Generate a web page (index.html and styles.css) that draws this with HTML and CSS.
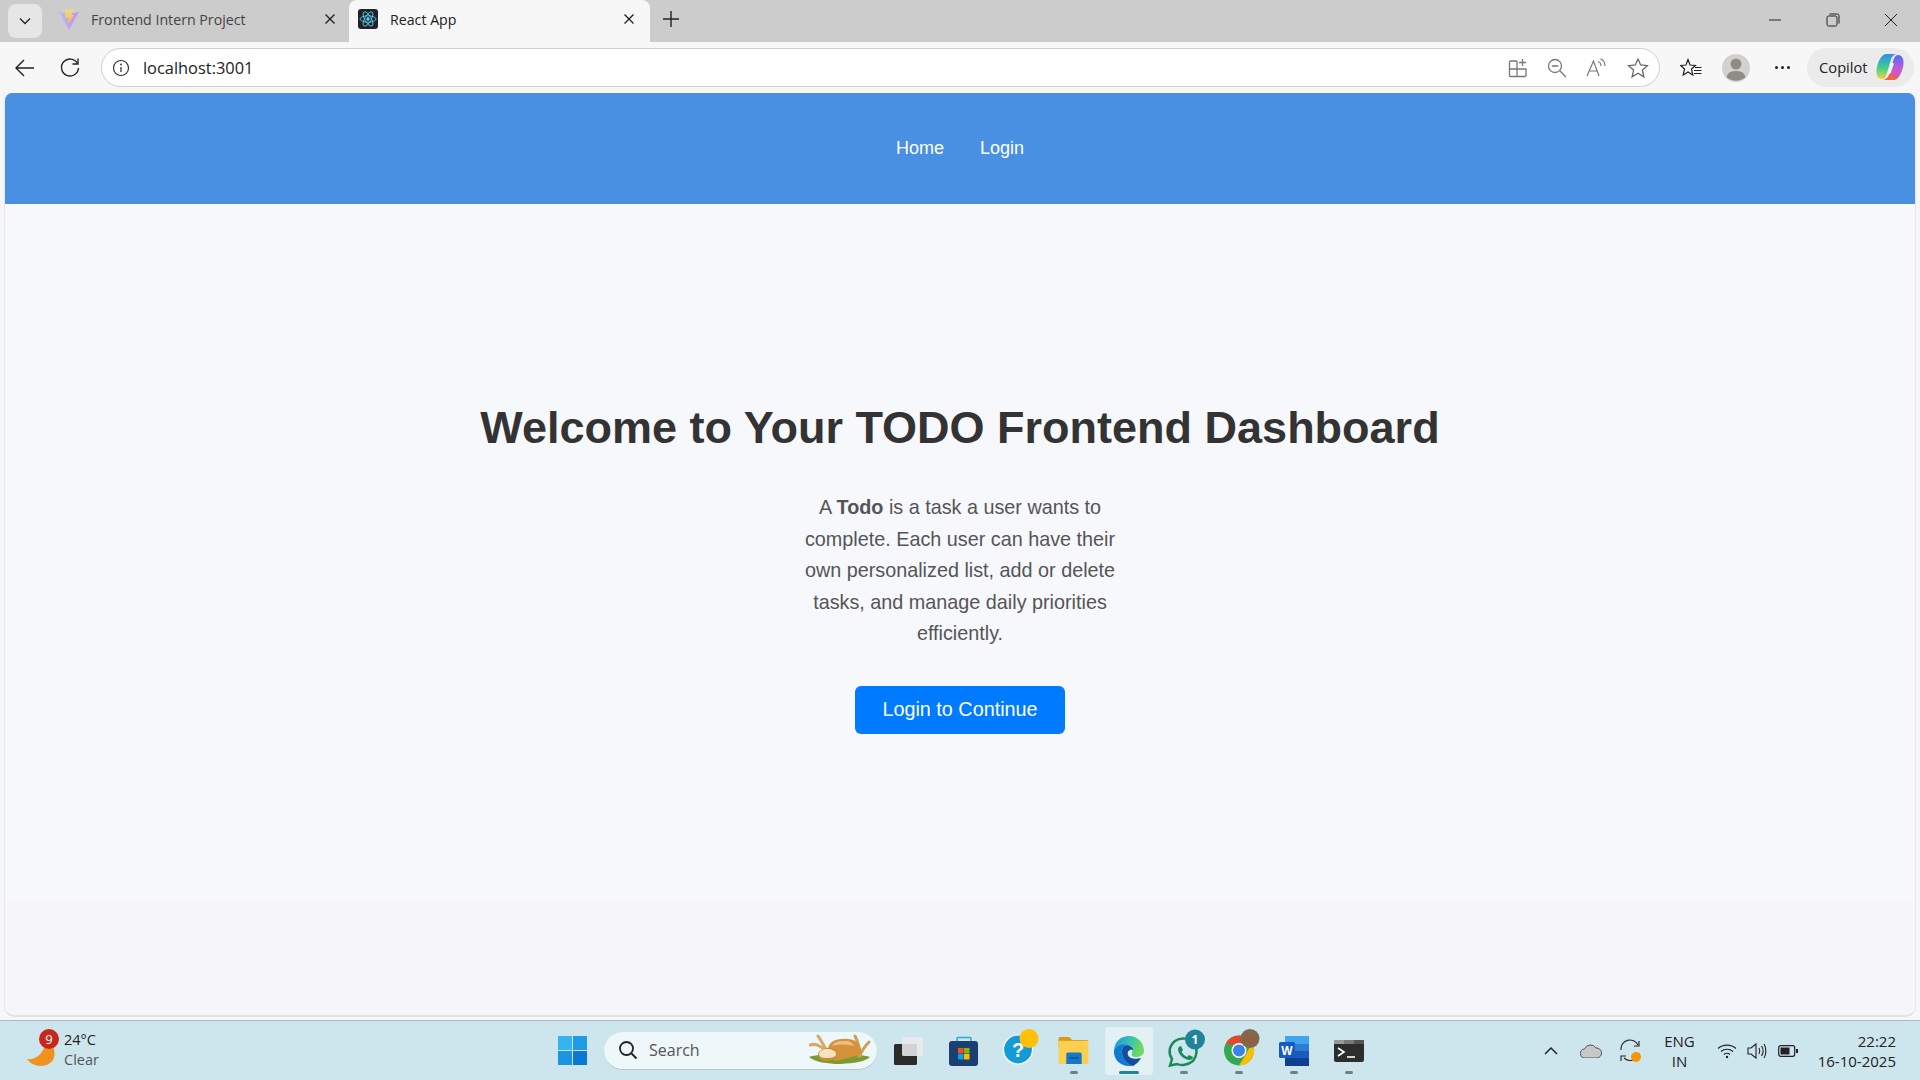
FILE: index.html
```html
<!DOCTYPE html>
<html lang="en">
<head>
  <meta charset="UTF-8" />
  <title>React App</title>
  <link rel="stylesheet" href="styles.css">
</head>
<body>
  <div class="tabstrip">
    <button class="tab-menu">
      <svg width="14" height="14" viewBox="0 0 14 14"><path d="M2 4.500 7 9.500 12 4.500" fill="none" stroke="#222" stroke-width="1.300"/></svg>
    </button>
    <div class="tab">
      <svg class="favicon" width="20" height="21" viewBox="0 0 20 21">
        <defs>
          <linearGradient id="viteBody" x1="0" y1="0" x2="1" y2="0"><stop offset="0" stop-color="#a3cdf3"/><stop offset=".5" stop-color="#bca2ef"/><stop offset="1" stop-color="#c596ee"/></linearGradient>
          <linearGradient id="viteBolt" x1="0" y1="0" x2="0" y2="1"><stop offset="0" stop-color="#f3dc84"/><stop offset="1" stop-color="#f0b24e"/></linearGradient>
        </defs>
        <path d="M0 3 10 5 20 3 10 21Z" fill="url(#viteBody)"/>
        <path d="M6 1 14 0 12.500 6 15 6 8.500 16 9.500 9 6.500 9Z" fill="url(#viteBolt)"/>
      </svg>
      <span class="tab-title">Frontend Intern Project</span>
      <svg class="tab-close" width="12" height="12" viewBox="0 0 12 12"><path d="M1.500 1.500 10.500 10.500M10.500 1.500 1.500 10.500" stroke="#222" stroke-width="1.400"/></svg>
    </div>
    <div class="tab tab-active">
      <svg class="favicon" width="20" height="20" viewBox="0 0 20 20">
        <rect width="20" height="20" rx="3" fill="#20232a"/>
        <circle cx="10" cy="10" r="1.700" fill="#61dafb"/>
        <g fill="none" stroke="#61dafb" stroke-width=".8">
          <ellipse cx="10" cy="10" rx="8" ry="3.200"/>
          <ellipse cx="10" cy="10" rx="8" ry="3.200" transform="rotate(60 10 10)"/>
          <ellipse cx="10" cy="10" rx="8" ry="3.200" transform="rotate(120 10 10)"/>
        </g>
      </svg>
      <span class="tab-title">React App</span>
      <svg class="tab-close" width="12" height="12" viewBox="0 0 12 12"><path d="M1.500 1.500 10.500 10.500M10.500 1.500 1.500 10.500" stroke="#222" stroke-width="1.400"/></svg>
    </div>
    <svg class="tab-new" width="18" height="18" viewBox="0 0 18 18"><path d="M9 1V17M1 9H17" stroke="#222" stroke-width="1.400"/></svg>
    <div class="window-controls">
      <svg width="14" height="14" viewBox="0 0 14 14"><path d="M1 7H13" stroke="#222" stroke-width="1"/></svg>
      <svg width="14" height="14" viewBox="0 0 14 14"><rect x="1" y="3" width="10" height="10" rx="1.500" fill="none" stroke="#222"/><path d="M3.500 1H11.500A1.500 1.500 0 0 1 13 2.500V10.500" fill="none" stroke="#222"/></svg>
      <svg width="14" height="14" viewBox="0 0 14 14"><path d="M1 1 13 13M13 1 1 13" stroke="#222" stroke-width="1"/></svg>
    </div>
  </div>

  <div class="toolbar">
    <svg class="tool-back" width="22" height="22" viewBox="0 0 22 22"><path d="M20 11H2M10 3 2 11 10 19" fill="none" stroke="#222" stroke-width="1.400"/></svg>
    <svg class="tool-refresh" width="22" height="22" viewBox="0 0 22 22"><path d="M18.500 6.500A8.500 8.500 0 1 0 19.500 11" fill="none" stroke="#222" stroke-width="1.400"/><path d="M19 1.500V7H13.500" fill="none" stroke="#222" stroke-width="1.400"/></svg>
    <div class="address">
      <svg width="18" height="18" viewBox="0 0 18 18"><circle cx="9" cy="9" r="7.500" fill="none" stroke="#333" stroke-width="1.200"/><path d="M9 8V13" stroke="#333" stroke-width="1.300"/><circle cx="9" cy="5.500" r=".9" fill="#333"/></svg>
      <span class="url">localhost:3001</span>
      <div class="address-icons">
        <svg width="20" height="20" viewBox="0 0 20 20" fill="none" stroke="#777" stroke-width="1.300"><path d="M9 3H2.500A1 1 0 0 0 1.500 4V17.500A1 1 0 0 0 2.500 18.500H17A1 1 0 0 0 18 17.500V11H1.500M9 3V18.500"/><path d="M14.500 1V8M11 4.500H18"/></svg>
        <svg width="20" height="20" viewBox="0 0 20 20" fill="none" stroke="#777" stroke-width="1.300"><circle cx="8" cy="8" r="6.500"/><path d="M4.800 8H11.200M13 13 19 19"/></svg>
        <svg width="22" height="20" viewBox="0 0 22 20" fill="none" stroke="#777" stroke-width="1.200"><path d="M1 18 7.500 3 13 18M3.500 13H11"/><path d="M12 3.500C14 4 15 5.500 15 8M14.500 1C17.500 2 19 4.500 19 8"/></svg>
        <svg width="22" height="22" viewBox="0 0 22 22" fill="none" stroke="#666" stroke-width="1.300"><path d="M11 2 13.700 8 20.500 8.700 15.400 13.100 16.900 19.800 11 16.300 5.100 19.800 6.600 13.100 1.500 8.700 8.300 8Z"/></svg>
      </div>
    </div>
    <svg class="tool-favs" width="22" height="20" viewBox="0 0 22 20" fill="none" stroke="#222" stroke-width="1.200"><path d="M8 1.500 10 7 15.500 7.500 11.500 11 12.800 17 8 14 3.200 17 4.500 11 .7 7.500 6 7Z"/><path d="M15 9.500H21.500M14 12.500H21.500M14 15.500H21.500"/></svg>
    <svg class="tool-avatar" width="28" height="28" viewBox="0 0 28 28"><circle cx="14" cy="14" r="14" fill="#d3d2ce"/><circle cx="14" cy="10" r="5.500" fill="#8f8c87"/><path d="M4.500 23C6 18.500 9 17 14 17S22 18.500 23.500 23A14 14 0 0 1 4.500 23Z" fill="#8f8c87"/></svg>
    <div class="tool-dots"><span></span><span></span><span></span></div>
    <div class="copilot">
      <span>Copilot</span>
      <svg width="28" height="28" viewBox="0 0 28 28">
        <defs>
          <linearGradient id="copilotLeft" x1="0" y1="0" x2="0" y2="1"><stop offset="0" stop-color="#2f8ff0"/><stop offset=".55" stop-color="#3fcf8c"/><stop offset="1" stop-color="#f2d23e"/></linearGradient>
          <linearGradient id="copilotRight" x1="0" y1="0" x2="0" y2="1"><stop offset="0" stop-color="#4f6cf0"/><stop offset=".5" stop-color="#b45ee0"/><stop offset="1" stop-color="#f0507a"/></linearGradient>
        </defs>
        <path d="M10 1H20C17 2 15.500 4 14.500 8L11 20C10 23 9 26 7 26H6C2 26 0 22 .5 17 1 11 5 1 10 1Z" fill="url(#copilotLeft)"/>
        <path d="M18 27H8C11 26 12.500 24 13.500 20L17 8C18 5 19.500 2 22 2 26 2 28 6 27.500 11 27 17 23 27 18 27Z" fill="url(#copilotRight)"/>
        <path d="M8 27C11 26 12.500 24 13.500 21L20 25C19 26 18.500 27 17 27Z" fill="#f2673a"/>
        <path d="M16.500 11 13.500 19.500" stroke="#f4f4f4" stroke-width="2.500" stroke-linecap="round"/>
      </svg>
    </div>
  </div>

  <main class="page">
    <nav class="navbar">
      <a href="#">Home</a>
      <a href="#">Login</a>
    </nav>
    <section class="hero">
      <h1>Welcome to Your TODO Frontend Dashboard</h1>
      <p>A <strong>Todo</strong> is a task a user wants to complete. Each user can have their own personalized list, add or delete tasks, and manage daily priorities efficiently.</p>
      <button class="login-btn">Login to Continue</button>
    </section>
  </main>

  <footer class="taskbar">
    <div class="weather">
      <svg class="weather-icon" width="32" height="26" viewBox="0 0 32 26"><path d="M1 18C8 19 17 15 20 1 29 2 30 14 27 19 22 27 7 27 1 18Z" fill="#f0921f"/></svg>
      <span class="weather-badge">9</span>
      <div class="weather-text"><span>24°C</span><span class="weather-sub">Clear</span></div>
    </div>

    <div class="task-center">
      <div class="slot">
        <svg width="29" height="29" viewBox="0 0 29 29">
          <rect width="14" height="14" fill="#36b4f2"/><rect x="15" width="14" height="14" fill="#1e9ae6"/>
          <rect y="15" width="14" height="14" fill="#1a94e4"/><rect x="15" y="15" width="14" height="14" fill="#0a78d4"/>
        </svg>
      </div>
      <div class="search">
        <svg width="20" height="20" viewBox="0 0 20 20" fill="none" stroke="#222" stroke-width="1.800"><circle cx="8.500" cy="8.500" r="6.500"/><path d="M13.500 13.500 18.500 18.500"/></svg>
        <span>Search</span>
        <svg class="search-art" width="62" height="32" viewBox="0 0 62 32">
          <path d="M0 23C10 19 50 19 61 23 56 28 44 29 32 30 18 30 6 28 0 23Z" fill="#7c9a2f"/>
          <path d="M1 11C6 9 13 12 19 19M9 2C12 6 15 12 19 19" fill="none" stroke="#d3ad68" stroke-width="3" stroke-linecap="round"/>
          <path d="M46 2C49 8 51 14 50 22M60 8C56 12 53 16 51 22" fill="none" stroke="#c9a35a" stroke-width="3" stroke-linecap="round"/>
          <path d="M19 14C21 7 27 5 34 5 43 4 51 8 52 15 53 19 52 20 50 21L27 27C22 26 18 20 19 14Z" fill="#d6923a"/>
          <path d="M23 12C25 8 30 7 36 7 41 7 44 9 45 12 38 10 30 10 23 12Z" fill="#eebf7e"/>
          <path d="M9 21C9 17 13 15 18 14 24 13 28 17 28 21 28 25 24 27 18 27 13 27 9 25 9 21Z" fill="#c98a3a"/>
          <path d="M10 20C10 17 14 15 18 15 23 15 27 17 27 20 27 23 23 24 18 24 13 24 10 23 10 20Z" fill="#f5e3bd"/>
        </svg>
      </div>
      <div class="slot">
        <svg width="29" height="28" viewBox="0 0 29 28"><rect y="7" width="23" height="21" rx="1.500" fill="#2b2b2b"/><rect x="8" width="21" height="19" rx="1.500" fill="#e9ebec" opacity=".88"/></svg>
      </div>
      <div class="slot">
        <svg width="30" height="30" viewBox="0 0 30 30">
          <path d="M8 5V2.500A1 1 0 0 1 9 1.500H21A1 1 0 0 1 22 2.500V5" fill="none" stroke="#2aa9e0" stroke-width="1.500"/>
          <rect y="5" width="29" height="25" rx="3" fill="#1c3f72"/>
          <rect x="9" y="12" width="5.500" height="5.500" fill="#f25022"/><rect x="15" y="12" width="5.500" height="5.500" fill="#7fba00"/>
          <rect x="9" y="18" width="5.500" height="5.500" fill="#00a4ef"/><rect x="15" y="18" width="5.500" height="5.500" fill="#ffb900"/>
        </svg>
      </div>
      <div class="slot">
        <svg width="44" height="44" viewBox="0 0 44 44">
          <circle cx="21" cy="20.500" r="14.500" fill="#129bd6" stroke="#fff" stroke-width="1.200"/>
          <text x="21" y="28" text-anchor="middle" class="help-mark">?</text>
          <circle cx="32" cy="9.500" r="9.500" fill="#ffc107"/>
        </svg>
      </div>
      <div class="slot slot-open">
        <svg width="31" height="27" viewBox="0 0 31 28">
          <path d="M0 2A2 2 0 0 1 2 0H11L14 3H30V10H0Z" fill="#d99a0b"/>
          <path d="M0 4H29A2 2 0 0 1 31 6V26A2 2 0 0 1 29 28H2A2 2 0 0 1 0 26Z" fill="#fbd04f"/>
          <path d="M8 18A2 2 0 0 1 10 16H22A2 2 0 0 1 24 18V28H8Z" fill="#1578c9"/>
          <rect x="11" y="21" width="10" height="1.500" fill="#0c4f8c"/>
        </svg>
      </div>
      <div class="slot slot-active">
        <svg width="32" height="32" viewBox="0 0 32 32">
          <defs>
            <linearGradient id="edgeTop" x1="0" y1="0" x2="1" y2=".3"><stop offset="0" stop-color="#1d93d8"/><stop offset=".55" stop-color="#35c3b4"/><stop offset="1" stop-color="#71da5c"/></linearGradient>
          </defs>
          <path d="M1 15C2 6 8 1 16 1 25 1 31 8 31 16 31 20 27 22 23 22 20 22 18 21 19 18 20 15 19 11 15 10 10 9 4 10 1 15Z" fill="url(#edgeTop)"/>
          <path d="M1 15C4 10 10 8 15 10 10 10 8 14 9 19 10 25 15 30 20 31 19 31 17 31 16 31 7 31 0 24 1 15Z" fill="#0f7ad0"/>
          <path d="M9 19C8 14 10 10 15 10 18 11 20 13 20 15 16 14 14 17 15 20 16 23 21 25 28 23 25 28 22 30 20 31 15 30 10 25 9 19Z" fill="#0f4f9e"/>
        </svg>
      </div>
      <div class="slot slot-open">
        <svg width="44" height="44" viewBox="0 0 44 44">
          <path d="M8 36.500 10 30C6 24 7 17 13 12 19 8 27 9 32 14 36 20 35 27 31 32 26 36 19 37 15 35Z" fill="none" stroke="#1b8a5a" stroke-width="2.500"/>
          <path d="M16 20C16 18 18 17 19 17L21 21 19.500 23C21 25 23 27 25 28L27 26 31 28C31 30 29 31 27 31 21 30 16 25 16 20Z" fill="#1b8a5a"/>
          <circle cx="33" cy="10.500" r="10" fill="#21829a"/>
          <text x="33" y="15" text-anchor="middle" class="count-mark">1</text>
        </svg>
      </div>
      <div class="slot slot-open">
        <svg width="44" height="44" viewBox="0 0 44 44">
          <circle cx="22" cy="21.500" r="15" fill="#34a853"/>
          <path d="M22 6.500A15 15 0 0 1 35 14H22L14 16 9 14A15 15 0 0 1 22 6.500Z" fill="#e8452f"/>
          <path d="M35 14A15 15 0 0 1 22 36.500L29 25Z" fill="#fbbc04"/>
          <circle cx="22" cy="21.500" r="7.500" fill="#fff"/><circle cx="22" cy="21.500" r="6" fill="#3b82e6"/>
          <circle cx="33" cy="9.500" r="9.500" fill="#7d6a4c"/>
          <path d="M27 8C31 4 35 14 40 8M26 12C31 9 35 18 40 12" stroke="#a3563c" stroke-width="2" fill="none"/>
        </svg>
      </div>
      <div class="slot slot-open">
        <svg width="30" height="30" viewBox="0 0 30 30">
          <rect x="6" width="24" height="8" fill="#41a5ee"/><rect x="6" y="8" width="24" height="7" fill="#2b7cd3"/>
          <rect x="6" y="15" width="24" height="7" fill="#185abd"/><rect x="6" y="22" width="24" height="8" fill="#103f91"/>
          <rect y="6" width="16" height="16" rx="1.500" fill="#185abd"/>
          <text x="8" y="19" text-anchor="middle" class="word-mark">W</text>
        </svg>
      </div>
      <div class="slot slot-open">
        <svg width="30" height="22" viewBox="0 0 30 22">
          <rect width="30" height="22" rx="2" fill="#2d2d2d"/>
          <rect x="10" width="10" height="4" fill="#777"/><rect width="10" height="4" fill="#999"/><rect x="20" width="10" height="4" fill="#555"/>
          <path d="M4 8 10 12 4 16" fill="none" stroke="#fff" stroke-width="1.600"/>
          <path d="M13 17H21" stroke="#fff" stroke-width="1.600"/>
        </svg>
      </div>
    </div>

    <div class="tray">
      <svg class="tray-chevron" width="14" height="10" viewBox="0 0 14 10"><path d="M1 8 7 2 13 8" fill="none" stroke="#222" stroke-width="1.500"/></svg>
      <svg class="tray-cloud" width="22" height="14" viewBox="0 0 22 14"><path d="M5 14A4.500 4.500 0 0 1 4.500 5 6.500 6.500 0 0 1 16 4 5 5 0 0 1 17 14Z" fill="#c8c8c8" stroke="#555"/></svg>
      <svg class="tray-sync" width="22" height="24" viewBox="0 0 22 24">
        <path d="M1 11A9 9 0 0 1 18 6M19 14A9 9 0 0 1 4 19" fill="none" stroke="#222" stroke-width="1.100"/>
        <path d="M19 2V7H14M1 22V17H6" fill="none" stroke="#222" stroke-width="1.100"/>
        <circle cx="16" cy="18" r="5" fill="#f7960a"/>
      </svg>
      <div class="tray-lang"><span>ENG</span><span>IN</span></div>
      <svg class="tray-wifi" width="20" height="16" viewBox="0 0 20 16" fill="none" stroke="#222" stroke-width="1.200"><path d="M1 5.500C6 1 14 1 19 5.500M4 8.500C7.500 5.500 12.500 5.500 16 8.500M7 11.500C8.800 10 11.200 10 13 11.500"/><circle cx="10" cy="14" r="1.200" fill="#222" stroke="none"/></svg>
      <svg class="tray-volume" width="20" height="18" viewBox="0 0 20 18" fill="none" stroke="#222" stroke-width="1.100"><path d="M1 6H4L9 2V16L4 12H1Z"/><path d="M12 6C13 8 13 10 12 12M14.500 4C16.500 7 16.500 11 14.500 14M17 2C19.500 6 19.500 12 17 16"/></svg>
      <svg class="tray-battery" width="20" height="12" viewBox="0 0 20 12"><rect x=".7" y=".7" width="16" height="10.600" rx="2" fill="none" stroke="#222" stroke-width="1.200"/><rect x="2.500" y="2.500" width="9" height="7" fill="#222"/><rect x="18" y="4" width="2" height="4" fill="#222"/></svg>
      <div class="clock"><span>22:22</span><span>16-10-2025</span></div>
    </div>
  </footer>
</body>
</html>
```

FILE: styles.css
```css
* {
  box-sizing: border-box;
  margin: 0;
  padding: 0;
}

body {
  height: 100vh;
  overflow: hidden;
  display: flex;
  flex-direction: column;
  background-color: #f7f7f7;
  font-family: 'Liberation Sans', Arial, sans-serif;
  color: #222;
}

/* browser tab strip */
.tabstrip {
  height: 42px;
  display: flex;
  align-items: flex-end;
  background-color: #cccccc;
  padding-left: 8px;
}

.tab-menu {
  width: 34px;
  height: 34px;
  margin-bottom: 4px;
  margin-right: 6px;
  border: none;
  border-radius: 8px;
  background-color: #e6e6e6;
  display: flex;
  align-items: center;
  justify-content: center;
}

.tab {
  width: 301px;
  height: 42px;
  display: flex;
  align-items: center;
  padding: 0 13px 4px 11px;
  font-family: 'Open Sans', sans-serif;
  font-size: 14.2px;
  color: #444;
}

.tab-active {
  padding: 0 15px 4px 9px;
  background-color: #f7f7f7;
  border-radius: 8px 8px 0 0;
  color: #222;
}

.favicon {
  flex-shrink: 0;
  margin-right: 12px;
}

.tab-title {
  flex: 1;
}

.tab-new {
  margin: 0 0 14px 12px;
}

.window-controls {
  margin-left: auto;
  display: flex;
  justify-content: flex-end;
  padding-right: 22px;
  margin-bottom: 15px;
  gap: 44px;
}

/* address bar row */
.toolbar {
  height: 51px;
  display: flex;
  align-items: center;
  background-color: #f7f7f7;
  padding: 0 6px 0 14px;
}

.tool-refresh {
  margin-left: 23px;
}

.address {
  width: 1560px;
  height: 39px;
  margin-left: 20px;
  display: flex;
  align-items: center;
  padding: 0 10px 0 10px;
  background-color: #fff;
  border: 1px solid #cfcfcf;
  border-radius: 20px;
}

.url {
  margin-left: 13px;
  font-family: 'Open Sans', sans-serif;
  font-size: 16.4px;
}

.address-icons {
  margin-left: auto;
  display: flex;
  align-items: center;
  gap: 19px;
}

.tool-favs {
  margin-left: 20px;
}

.tool-avatar {
  margin-left: 20px;
}

.tool-dots {
  margin-left: 25px;
  display: flex;
  gap: 3px;
}

.tool-dots span {
  width: 3px;
  height: 3px;
  border-radius: 50%;
  background-color: #222;
}

.copilot {
  margin-left: 17px;
  width: 107px;
  height: 39px;
  display: flex;
  align-items: center;
  justify-content: space-between;
  padding: 0 10px 2px 12px;
  background-color: #ebebeb;
  border-radius: 20px;
  font-family: 'Open Sans', sans-serif;
  font-size: 14.700px;
}

/* the page itself */
.page {
  height: 924px;
  margin: 0 4px;
  display: flex;
  flex-direction: column;
  background-color: #f5f5fa;
  border-bottom: 2px solid #e2e2e6;
  border-left: 1px solid #e8e8ec;
  border-right: 1px solid #e8e8ec;
  border-radius: 8px 8px 10px 10px;
  overflow: hidden;
}

.navbar {
  height: 111px;
  flex-shrink: 0;
  display: flex;
  align-items: center;
  justify-content: center;
  gap: 36px;
  background-color: #4a90e2;
}

.navbar a {
  color: #fff;
  font-size: 18px;
  font-weight: 500;
  text-decoration: none;
}

.hero {
  height: 698px;
  flex-shrink: 0;
  display: flex;
  flex-direction: column;
  align-items: center;
  padding-top: 198px;
  background-color: #f6f8fc;
}

.hero h1 {
  font-size: 45px;
  font-weight: bold;
  color: #333;
  margin-bottom: 38px;
}

.hero p {
  width: 340px;
  font-size: 19.800px;
  line-height: 31.500px;
  text-align: center;
  color: #555;
  margin-bottom: 36px;
}

.login-btn {
  width: 210px;
  height: 48px;
  border: none;
  border-radius: 6px;
  background-color: #007bff;
  color: #fff;
  font-family: 'Liberation Sans', Arial, sans-serif;
  font-size: 19.800px;
}

/* windows taskbar */
.taskbar {
  flex: 1;
  margin-top: 3px;
  display: flex;
  align-items: center;
  background-color: #cde5ec;
  border-top: 1px solid #a9bcc4;
  font-family: 'Open Sans', sans-serif;
}

.weather {
  position: relative;
  width: 545px;
  display: flex;
  align-items: center;
  padding-left: 26px;
}

.weather-icon {
  margin-top: 6px;
}

.weather-badge {
  position: absolute;
  left: 39px;
  top: -3px;
  width: 20px;
  height: 20px;
  border-radius: 50%;
  background-color: #c9261c;
  color: #fff;
  font-size: 13px;
  line-height: 20px;
  text-align: center;
}

.weather-text {
  display: flex;
  flex-direction: column;
  margin-left: 6px;
  margin-top: -2px;
  font-size: 14.500px;
  line-height: 20px;
}

.weather-sub {
  color: #555;
}

.task-center {
  display: flex;
  align-items: center;
}

.slot {
  position: relative;
  width: 55px;
  height: 48px;
  display: flex;
  align-items: center;
  justify-content: center;
  flex-shrink: 0;
}

.slot-open::after,
.slot-active::after {
  content: "";
  position: absolute;
  left: 50%;
  bottom: 1px;
  width: 8px;
  height: 3px;
  margin-left: -4px;
  border-radius: 2px;
  background-color: #6f7f86;
}

.slot-active {
  width: 48px;
  margin: 0 3.500px;
  border-radius: 4px;
  background-color: #e3f1f5;
}

.slot-active::after {
  width: 20px;
  margin-left: -10px;
  background-color: #21829a;
}

.search {
  width: 273px;
  height: 38px;
  margin: 0 4px;
  display: flex;
  align-items: center;
  padding-left: 14px;
  border-radius: 19px;
  background-color: #eef7f9;
  border-bottom: 1px solid #b4c6cc;
  font-size: 16px;
  color: #555;
  flex-shrink: 0;
}

.search span {
  margin-left: 11px;
}

.search-art {
  margin-left: auto;
  margin-right: 6px;
}

.help-mark {
  font-family: 'Liberation Sans', sans-serif;
  font-size: 20px;
  font-weight: bold;
  fill: #fff;
}

.count-mark {
  font-family: 'Open Sans', sans-serif;
  font-size: 12px;
  font-weight: bold;
  fill: #fff;
}

.word-mark {
  font-family: 'Liberation Sans', sans-serif;
  font-size: 12px;
  font-weight: bold;
  fill: #fff;
}

.tray {
  margin-left: auto;
  display: flex;
  align-items: center;
  padding-right: 24px;
  font-size: 15px;
}

.tray-cloud {
  margin-left: 22px;
}

.tray-sync {
  margin-left: 18px;
}

.tray-lang {
  margin-left: 22px;
  display: flex;
  flex-direction: column;
  align-items: center;
  line-height: 20px;
}

.tray-wifi {
  margin-left: 22px;
}

.tray-volume {
  margin-left: 10px;
}

.tray-battery {
  margin-left: 11px;
}

.clock {
  margin-left: 20px;
  display: flex;
  flex-direction: column;
  align-items: flex-end;
  line-height: 20px;
}
```
